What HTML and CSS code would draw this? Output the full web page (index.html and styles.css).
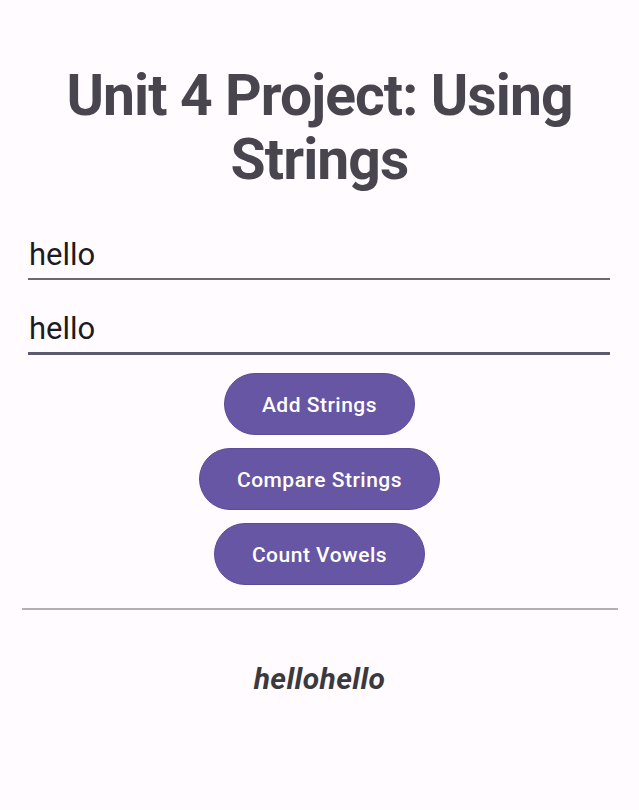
FILE: index.html
```html
<!DOCTYPE html>
<html>
<head>
<meta charset="utf-8">
<link rel="stylesheet" href="styles.css">
</head>
<body>
<main class="screen">
  <h1 class="title">Unit 4 Project: Using Strings</h1>
  <div class="field field-first"><span class="field-text">hello</span></div>
  <div class="field field-focused"><span class="field-text">hello</span></div>
  <div class="actions">
    <button class="btn">Add Strings</button>
    <button class="btn">Compare Strings</button>
    <button class="btn">Count Vowels</button>
  </div>
  <hr class="divider">
  <p class="result">hellohello</p>
</main>
</body>
</html>
```

FILE: styles.css
```css
html, body {
  margin: 0;
  padding: 0;
  background: #fffbfe;
}
.screen {
  width: 639px;
  height: 810px;
  box-sizing: border-box;
  padding-top: 64px;
  display: flex;
  flex-direction: column;
  font-family: Roboto, "Noto Sans", sans-serif;
}
.title {
  margin: 0 20px;
  font-size: 57px;
  line-height: 64px;
  letter-spacing: -0.9px;
  font-weight: 700;
  color: #49454f;
  text-align: center;
}
.field {
  margin: 0 29px 0 28px;
  padding: 0 0 5px 1px;
  font-size: 31px;
  line-height: 36px;
  color: #1c1b1f;
}
.field-first {
  margin-top: 45px;
  border-bottom: 2px solid #6b6970;
}
.field-focused {
  margin-top: 31px;
  border-bottom: 3px solid #5d5a6e;
}
.actions {
  margin-top: 18px;
  display: flex;
  flex-direction: column;
  align-items: center;
  gap: 13px;
}
.btn {
  height: 62px;
  padding: 2px 37px 0;
  border: 1px solid #5d4b98;
  border-radius: 31px;
  background: #6656a4;
  color: #ffffff;
  font-family: Roboto, "Noto Sans", sans-serif;
  font-size: 21px;
  letter-spacing: 0.5px;
  font-weight: 500;
}
.divider {
  margin: 23px 21px 0 22px;
  border: 0;
  height: 2px;
  background: #b3b0b5;
}
.result {
  margin: 53px 0 0;
  text-align: center;
  font-size: 30px;
  line-height: 32px;
  letter-spacing: 0.4px;
  font-weight: 700;
  font-style: italic;
  color: #3b3940;
}
```
